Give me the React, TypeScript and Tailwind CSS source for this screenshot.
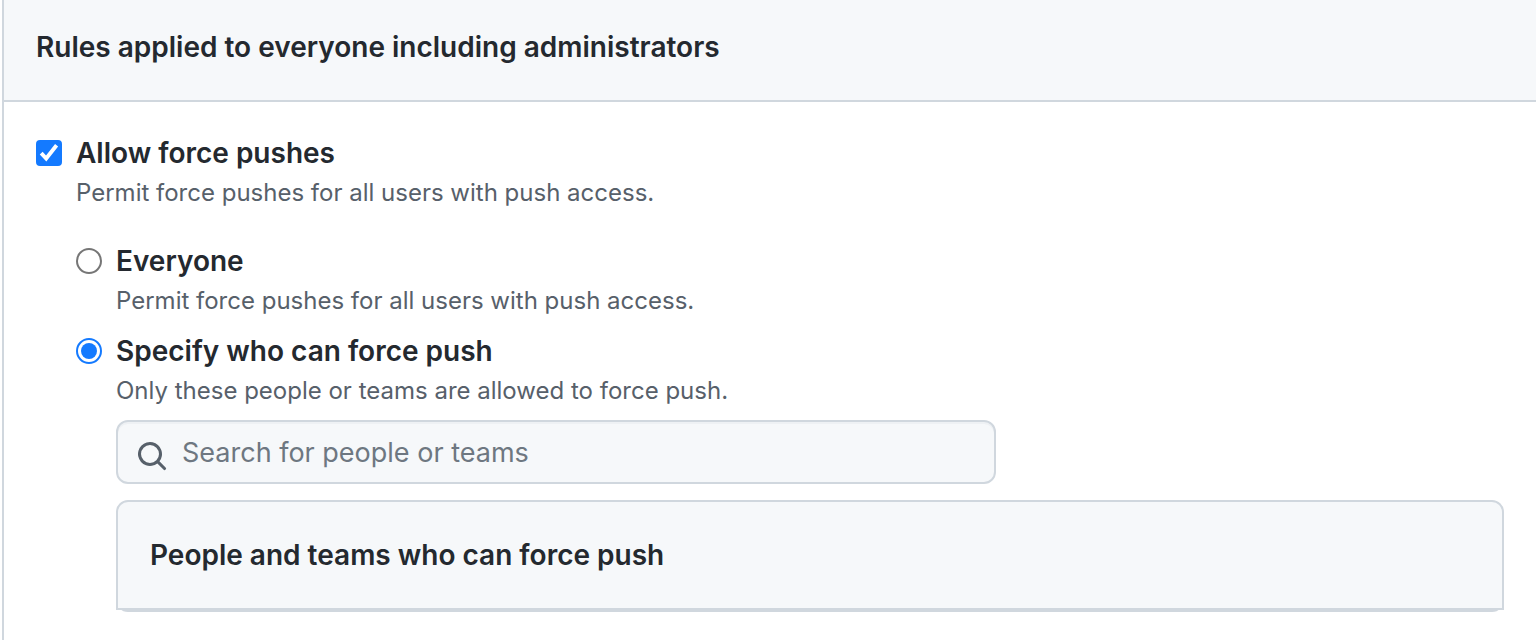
import { useState } from "react";

const boldText = "text-[28px] leading-[40px] font-semibold text-[#24292f]";
const noteText = "mt-0.5 text-[24px] leading-[36px] text-[#57606a]";

const radioClass =
  "h-[26px] w-[26px] shrink-0 appearance-none rounded-full border-2 border-[#767676] bg-white bg-clip-content p-[3px] checked:border-[#147aff] checked:bg-[#147aff]";

export default function App() {
  const [allow, setAllow] = useState(true);
  const [who, setWho] = useState("specify");

  return (
    <main className="ml-[2px] min-h-screen border-l-2 border-[#d0d7de] bg-white font-['Inter','Liberation_Sans',sans-serif]">
      <header className="border-b-2 border-[#d0d7de] bg-[#f6f8fa] px-8 pt-[27px] pb-[33px]">
        <h2 className={boldText}>Rules applied to everyone including administrators</h2>
      </header>
      <section className="px-8 pt-[31px]">
        <div className="flex items-start gap-[14px]">
          <div className="relative flex h-10 shrink-0 items-center">
            <input
              id="allow"
              type="checkbox"
              checked={allow}
              onChange={(e) => setAllow(e.target.checked)}
              className="h-[26px] w-[26px] appearance-none rounded-[4px] border-2 border-[#767676] checked:border-[#147aff] checked:bg-[#147aff]"
            />
            {allow && (
              <svg className="pointer-events-none absolute inset-x-0 h-[26px] w-[26px]" viewBox="0 0 26 26" fill="none">
                <path d="M5.2 13.200l5 5.300L20.600 5.300" stroke="#fff" strokeWidth="3.900" />
              </svg>
            )}
          </div>
          <div className="min-w-0 flex-1">
            <label htmlFor="allow" className={`block ${boldText}`}>Allow force pushes</label>
            <p className={noteText}>Permit force pushes for all users with push access.</p>
            <div className="mt-[30px] flex items-start gap-[14px]">
              <div className="flex h-10 items-center">
                <input id="everyone" type="radio" name="who" checked={who === "everyone"} onChange={() => setWho("everyone")} className={radioClass} />
              </div>
              <div>
                <label htmlFor="everyone" className={`block ${boldText}`}>Everyone</label>
                <p className={noteText}>Permit force pushes for all users with push access.</p>
              </div>
            </div>
            <div className="mt-3 flex items-start gap-[14px]">
              <div className="flex h-10 items-center">
                <input id="specify" type="radio" name="who" checked={who === "specify"} onChange={() => setWho("specify")} className={radioClass} />
              </div>
              <div className="min-w-0 flex-1">
                <label htmlFor="specify" className={`block ${boldText}`}>Specify who can force push</label>
                <p className={noteText}>Only these people or teams are allowed to force push.</p>
                <div className="mt-[11px] flex h-16 max-w-[880px] items-center gap-[14px] rounded-xl border-2 border-[#d0d7de] bg-[#f6f8fa] pl-[18px] shadow-[inset_0_2px_0_rgba(208,215,222,0.2)]">
                  <svg className="mt-2 h-8 w-8 shrink-0" viewBox="0 0 16 16" fill="#57606a">
                    <path fillRule="evenodd" d="M11.500 7a4.499 4.499 0 11-8.998 0A4.499 4.499 0 0111.500 7zm-.82 4.740a6 6 0 111.060-1.060l3.040 3.040a.75.75 0 11-1.060 1.060l-3.040-3.040z" />
                  </svg>
                  <input aria-label="Search for people or teams" placeholder="Search for people or teams" className="h-full min-w-0 flex-1 bg-transparent pr-4 text-[27px] text-[#24292f] outline-none placeholder:text-[#6e7781]" />
                </div>
                <div className="mt-4 rounded-xl border-b-2 border-[#d0d7de]">
                  <div className="rounded-t-xl border-2 border-[#d0d7de] bg-[#f6f8fa] px-8 py-[33px]">
                    <h3 className={boldText}>People and teams who can force push</h3>
                  </div>
                </div>
              </div>
            </div>
          </div>
        </div>
      </section>
    </main>
  );
}
